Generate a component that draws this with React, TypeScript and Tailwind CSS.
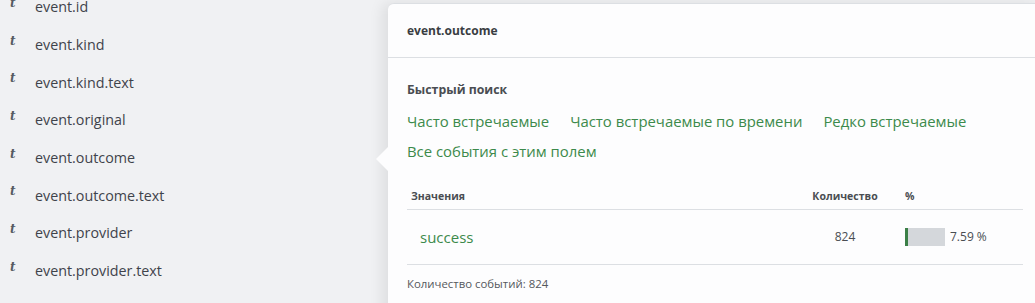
import React from 'react';

const fields = [
  'event.id',
  'event.kind',
  'event.kind.text',
  'event.original',
  'event.outcome',
  'event.outcome.text',
  'event.provider',
  'event.provider.text',
];

const quickLinks = [
  'Часто встречаемые',
  'Часто встречаемые по времени',
  'Редко встречаемые',
  'Все события с этим полем',
];

const values = [{ value: 'success', count: 824, percent: 7.59 }];

export default function App() {
  return (
    <div
      className="relative w-[1035px] h-[303px] overflow-hidden bg-[#f0f1f3]"
      style={{ fontFamily: '"Open Sans", "Noto Sans", sans-serif' }}
    >
      {/* Field list */}
      <ul className="-mt-[12px] flex flex-col">
        {fields.map(f => (
          <li key={f} className="h-[37.7px] flex items-center shrink-0">
            <span
              className="w-[35px] pl-[10px] -mt-[8px] text-[12px] font-bold italic text-[#555a62]"
              style={{ fontFamily: '"DejaVu Serif", serif' }}
            >
              t
            </span>
            <span className="text-[14.3px] text-[#3f434b]">{f}</span>
          </li>
        ))}
      </ul>

      {/* Field popover */}
      <div className="absolute left-[388px] top-[3px] w-[654px] h-[320px] bg-[#fdfdfe] rounded-tl-[6px] border-t border-[#dcdfe3] shadow-[-6px_0_14px_rgba(0,0,0,0.08)]">
        {/* arrow */}
        <div className="absolute -left-[12px] top-[143px] w-0 h-0 border-y-[12px] border-y-transparent border-r-[12px] border-r-[#fdfdfe]" />

        <div className="h-[54px] flex items-center px-[19px] border-b border-[#dcdfe3]">
          <span className="text-[12px] font-bold text-[#3a3d42]">event.outcome</span>
        </div>

        <div className="px-[19px] pt-[23px]">
          <h3 className="text-[12.3px] leading-[18px] font-bold text-[#4a4d52]">Быстрый поиск</h3>
          <div className="mt-[7px] flex flex-wrap gap-x-[21px] w-[580px]">
            {quickLinks.map(l => (
              <a key={l} className="text-[14.9px] leading-[30px] text-[#3c8a4b] cursor-pointer hover:underline">
                {l}
              </a>
            ))}
          </div>

          <div className="mt-[18px]">
            <div className="grid grid-cols-[1fr_80px_118px] gap-x-[20px] h-[26px] items-center border-b border-[#dcdfe3] text-[10.5px] font-bold text-[#4a4d52]">
              <span className="pl-[4px]">Значения</span>
              <span className="text-center">Количество</span>
              <span>%</span>
            </div>
            {values.map(v => (
              <div
                key={v.value}
                className="grid grid-cols-[1fr_80px_118px] gap-x-[20px] h-[55px] items-center border-b border-[#dcdfe3]"
              >
                <a className="pl-[13px] text-[15px] text-[#3c8a4b] cursor-pointer">{v.value}</a>
                <span className="text-center text-[12px] text-[#4a4d52]">{v.count}</span>
                <div className="flex items-center gap-[5px]">
                  <div className="w-[40px] h-[18px] bg-[#d4d7db]">
                    <div className="h-full bg-[#3b7f47]" style={{ width: `${v.percent}%` }} />
                  </div>
                  <span className="text-[12px] text-[#4a4d52]">{v.percent} %</span>
                </div>
              </div>
            ))}
          </div>

          <p className="pt-[11px] text-[11.4px] leading-[16px] text-[#55585d]">Количество событий: 824</p>
        </div>
      </div>
    </div>
  );
}
